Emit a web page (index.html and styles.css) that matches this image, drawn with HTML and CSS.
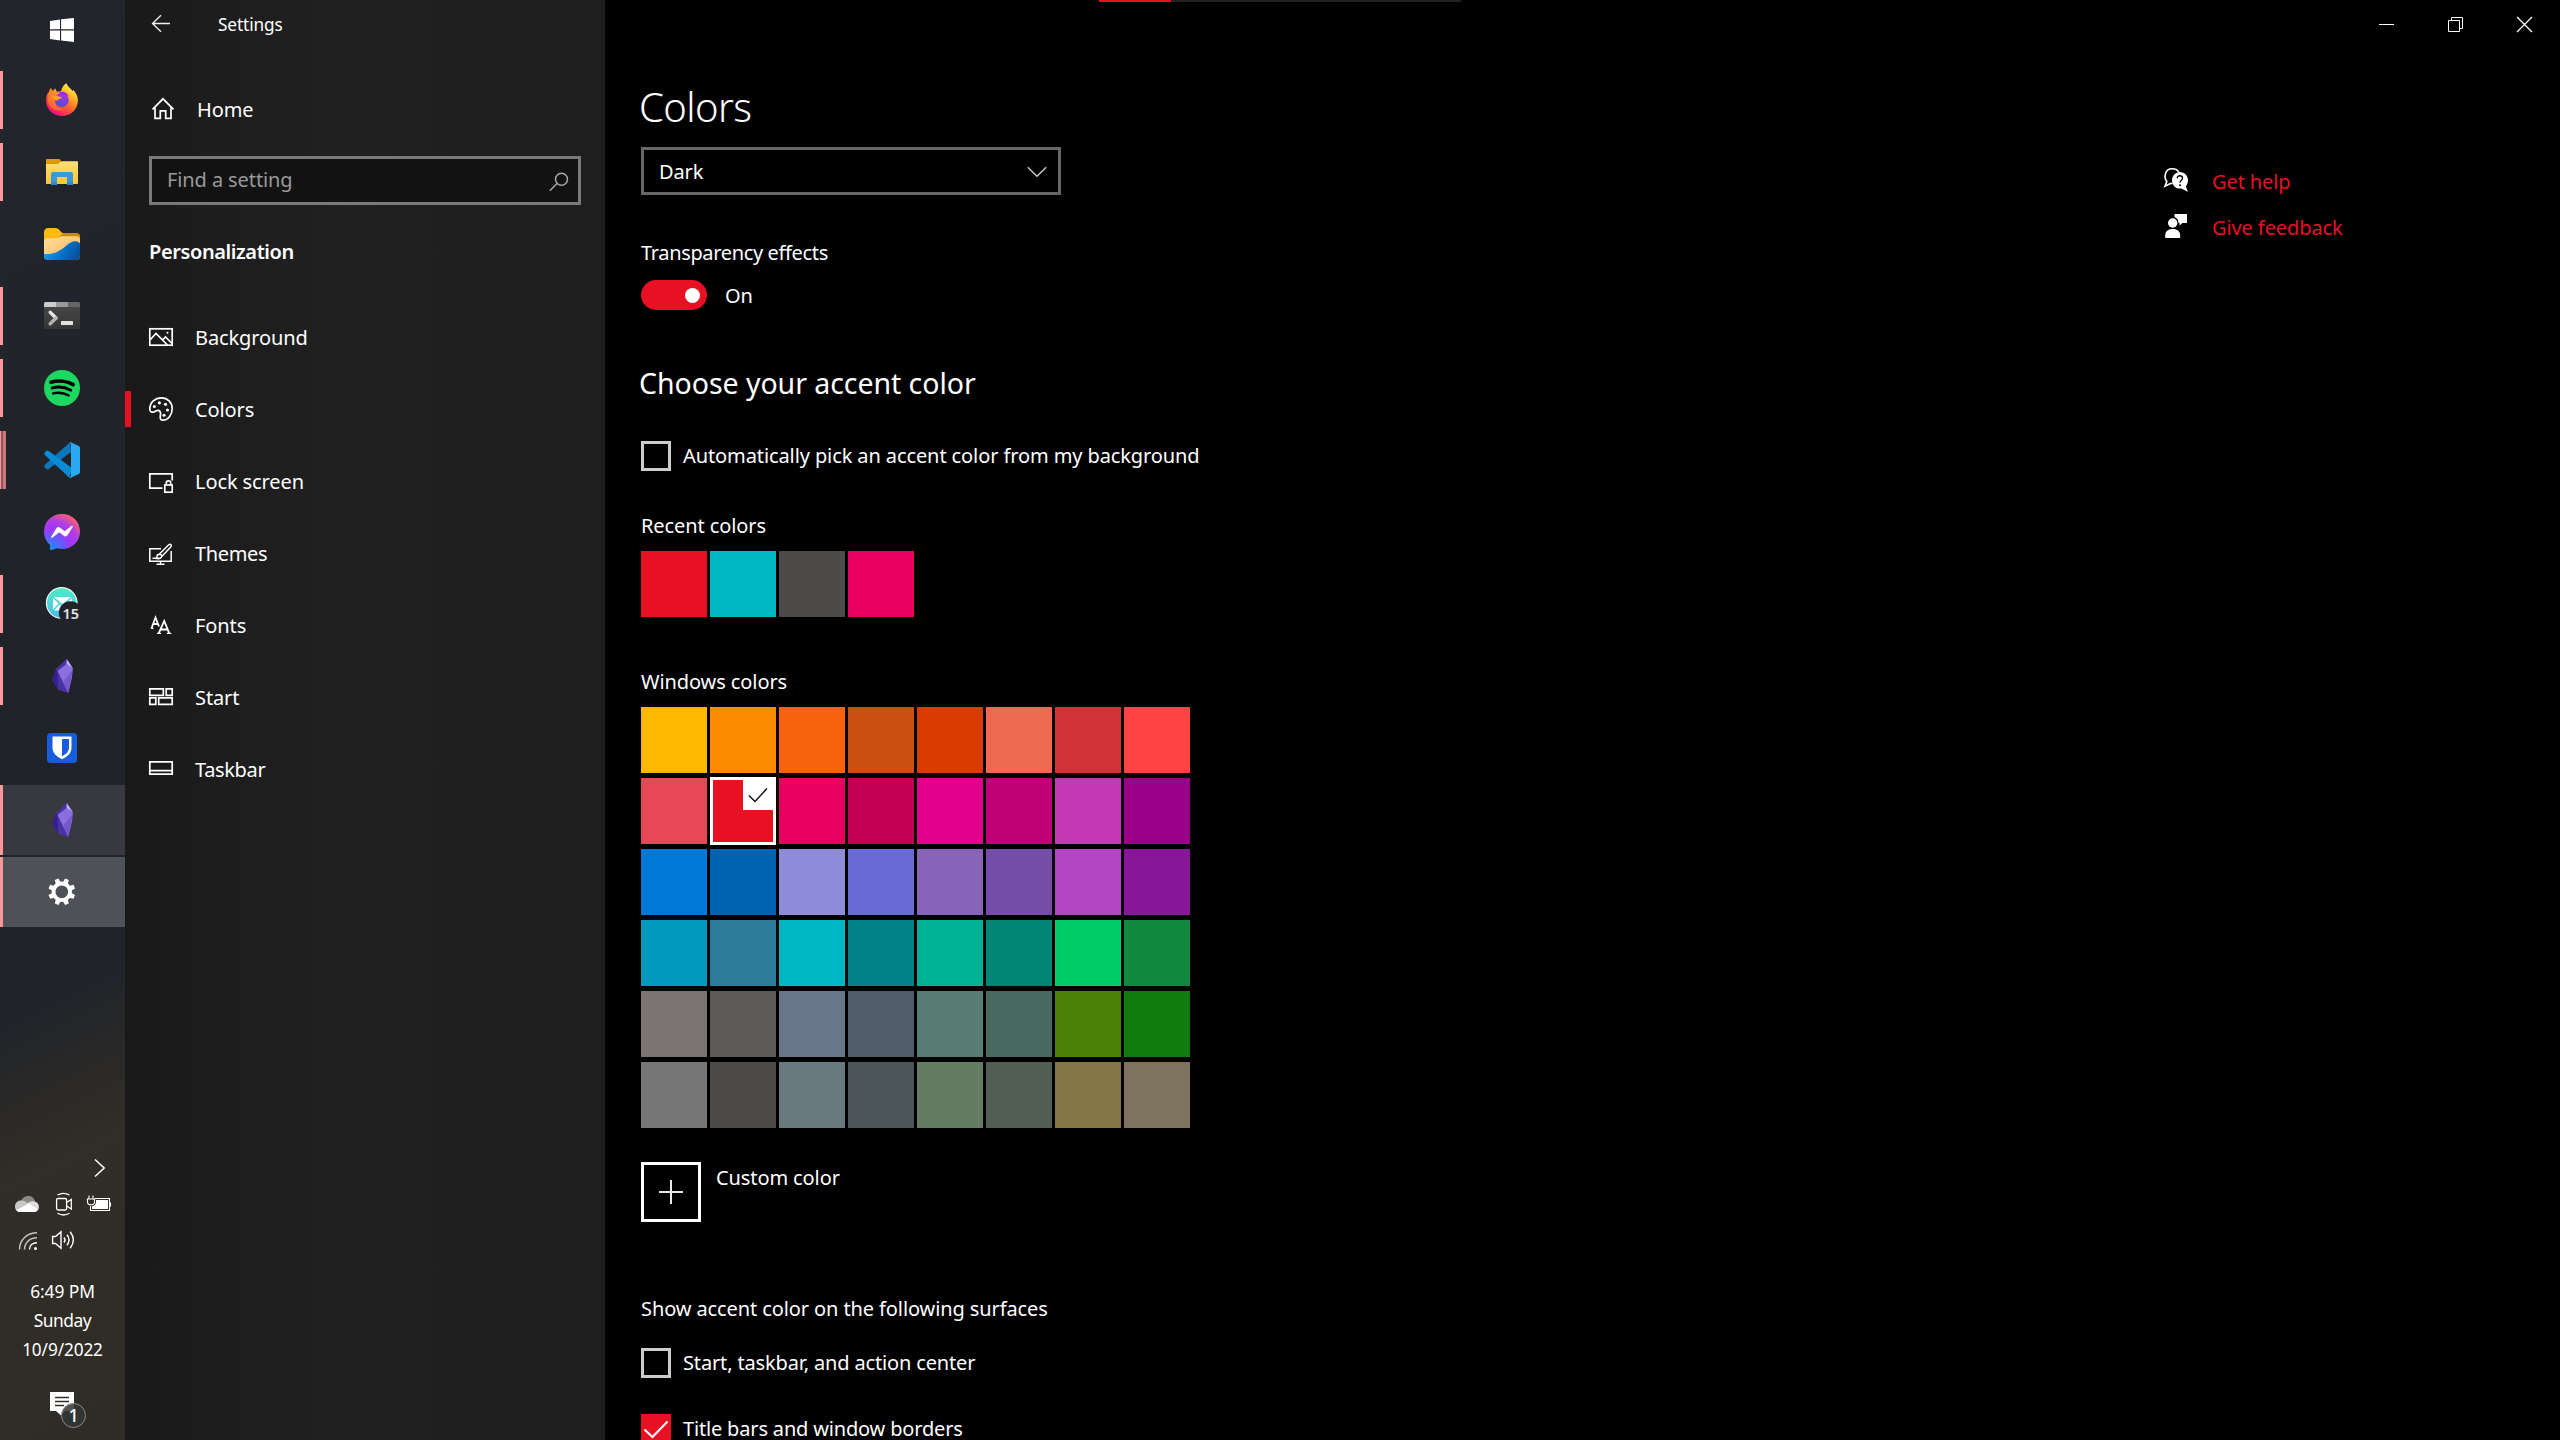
FILE: index.html
```html
<!DOCTYPE html>
<html lang="en">
<head>
<meta charset="utf-8">
<title>Settings</title>
<link rel="stylesheet" href="styles.css">
</head>
<body>
<div class="screen">

<div class="taskbar">
  <div class="task start"><svg width="36" height="36" viewBox="0 0 36 36" fill="#fff"><path d="M6 8.9 16 7.5V17.3H6zM17.1 7.3 30 6V17.3H17.1zM6 18.6H16V28.5L6 27.1zM17.1 18.6H30V30L17.1 28.6z"/></svg></div>

  <div class="task open"><svg width="36" height="36" viewBox="0 0 36 36">
    <defs>
      <linearGradient id="ffBody" x1=".85" y1=".1" x2=".3" y2="1"><stop offset="0" stop-color="#fff04a"/><stop offset=".3" stop-color="#ffb028"/><stop offset=".55" stop-color="#ff6a2c"/><stop offset=".8" stop-color="#ff3250"/><stop offset="1" stop-color="#e00a86"/></linearGradient>
      <linearGradient id="ffBall" x1=".7" y1="0" x2=".3" y2="1"><stop offset="0" stop-color="#b42df0"/><stop offset="1" stop-color="#4a52c8"/></linearGradient>
    </defs>
    <path fill="url(#ffBody)" d="M22.4 1.2C23.4 4.5 27 6.300 28.800 9.300L29.200 7.800C32.500 11.500 34 15 33.900 19C33.500 27.500 27 34 18 34C9 34 2.100 27.500 2.100 18.500C2.100 15 3 11.500 4.500 10L4.800 11.200C5 9 5.800 7 7 5.800C7.300 7.300 8 8.300 9 8.900C9.800 7.500 10.800 6.700 11.600 6.500C11.600 8 12.200 9.200 13.500 9.800L17 9.300C17.500 6 19.500 3 22.400 1.200Z"/>
    <path fill="#ff9422" d="M4.500 11C7 9.500 11 9.500 13.400 10.100L17 14.500L11 19C11 25 17 28 22 26C15 31 5 28 4 19Z" opacity=".55"/>
    <circle cx="17.800" cy="18" r="7" fill="url(#ffBall)"/>
    <path fill="#ff9b20" d="M7.500 14.200C10 13.200 14.500 13.900 17.800 15.200C17 17 14.700 17.200 13.200 18.200C12 19.300 11.200 18 9.500 17.500Z"/>
    <path fill="#9b2be0" d="M15 10.200C19 8.600 23.500 10.800 24.800 14.500C23 12.800 20 12.300 17.500 13.200Z"/>
  </svg></div>

  <div class="task open"><svg width="36" height="36" viewBox="0 0 36 36">
    <defs><linearGradient id="exBody" x1="0" y1="0" x2="0" y2="1"><stop offset="0" stop-color="#ffdf78"/><stop offset="1" stop-color="#fbc733"/></linearGradient></defs>
    <path fill="#dc9a05" d="M2 6.200C2 5.500 2.500 5 3.200 5H15C16 5 16.300 6 17.200 7.200L15 10H2z"/>
    <path fill="url(#exBody)" d="M2 10H13.500C15 10 16 7.200 17.500 7.200H33C33.600 7.200 34 7.600 34 8.200V29C34 29.700 33.600 30 33 30H3C2.400 30 2 29.700 2 29z"/>
    <path fill="#3a98df" d="M7 31V20C7 18.800 7.800 18 9 18H27C28.200 18 29 18.800 29 20V31H23V23H13V31z"/>
    <path fill="#1f78c4" d="M7 28H13V31H7zM23 28H29V31H23z" opacity=".5"/>
  </svg></div>

  <div class="task"><svg width="36" height="32" viewBox="0 0 36 32">
    <defs>
      <linearGradient id="fiSand" x1="0" y1="0" x2="1" y2="1"><stop offset="0" stop-color="#ffe0a0"/><stop offset="1" stop-color="#ffb057"/></linearGradient>
      <linearGradient id="fiSea" x1="0" y1=".6" x2="1" y2=".9"><stop offset="0" stop-color="#109df0"/><stop offset=".5" stop-color="#0470c4"/><stop offset="1" stop-color="#0c4a92"/></linearGradient>
      <clipPath id="fiClip"><path d="M0 14.500C0 12 1.500 10.200 4 10.200H13C16 10.200 15.500 8.200 19 8.200H33C35 8.200 36 9.500 36 11.500V28C36 30.500 34.500 32 32 32H4C1.500 32 0 30.500 0 28z"/></clipPath>
    </defs>
    <path fill="#ffba14" d="M0 4.500C0 1.500 1.500 0 4.500 0H11C16 0 16 5 20 5.200H32C35 5.200 36 6.500 36 9V18H0z"/>
    <path fill="#c48c08" d="M20 5.200H32C35 5.200 36 6.500 36 9V14L14 11C17 10.500 15 6.500 20 5.200z"/>
    <g clip-path="url(#fiClip)"><path fill="url(#fiSand)" d="M0 8H36V32H0z"/><path fill="url(#fiSea)" d="M0 26C8 26.500 13 24.500 18 21C24 16.500 26 13.500 31 13.200C34 13 35 14.500 36 15.500V32H0z"/></g>
  </svg></div>

  <div class="task open"><svg width="36" height="36" viewBox="0 0 36 36">
    <defs><linearGradient id="teBody" x1="0" y1="0" x2="0" y2="1"><stop offset="0" stop-color="#4a4a4a"/><stop offset="1" stop-color="#353535"/></linearGradient></defs>
    <rect y="4" width="36" height="27" rx="1.500" fill="url(#teBody)"/>
    <path fill="#ccc" d="M1.500 4H12V9H0V5.500Q0 4 1.500 4z"/><path fill="#999" d="M12 4H24V9H12z"/><path fill="#666" d="M24 4H34.500Q36 4 36 5.500V9H24z"/>
    <path d="M6.200 14.300 12 20" fill="none" stroke="#e4e4e4" stroke-width="3.400" stroke-linecap="round"/><path d="M12 20 6.200 25.700" fill="none" stroke="#b4b4b4" stroke-width="3.400" stroke-linecap="round"/>
    <rect x="17" y="23" width="12" height="4" rx=".5" fill="#e2e2e2"/>
  </svg></div>

  <div class="task open"><svg width="36" height="36" viewBox="0 0 36 36">
    <circle cx="18" cy="18" r="18" fill="#1ed760"/>
    <g fill="none" stroke="#000" stroke-linecap="round"><path d="M7 12.200C14 10.300 23 11 29.200 14.600" stroke-width="3.600"/><path d="M8.200 18C14 16.400 21.300 17.200 26.800 20.200" stroke-width="2.900"/><path d="M9 23.400C14.500 22.100 20 22.800 24.700 25.500" stroke-width="2.300"/></g>
  </svg></div>

  <div class="task open grouped"><svg width="36" height="36" viewBox="0 0 36 36">
    <path fill="#0b76ba" d="M26 .2 1.100 22.600Q-.4 24 .6 25.300L2.600 27.300Q3.400 27.900 4.400 27.200L27 10z"/>
    <path fill="#0a8bd6" d="M4.400 8.700Q3.400 8 2.500 8.700L.6 10.500Q-.4 12 1.100 13.300L25.500 35.800 28 26z"/>
    <path fill="#29a9f2" d="M25.500 35.800Q27 34.700 27 33V3Q27 1.200 25.600.1Q26.200-.1 27 .3L34.800 4Q36 4.700 36 6V30Q36 31.300 34.800 32L27 35.700Q26.200 36.100 25.500 35.800z"/>
  </svg></div>

  <div class="task"><svg width="36" height="36" viewBox="0 0 36 36">
    <defs><radialGradient id="meFill" cx=".18" cy="1" r="1.100"><stop offset="0" stop-color="#0a95ff"/><stop offset=".55" stop-color="#a334fa"/><stop offset=".75" stop-color="#b040e0"/><stop offset="1" stop-color="#ff6070"/></radialGradient></defs>
    <path fill="url(#meFill)" d="M18 0C28.200 0 36 7.500 36 17.500S28.200 35 18 35C16.300 35 14.500 34.700 13 34.300L8 36C7 36.300 6 35.800 6 34.800V31C2 27.500 0 23 0 17.500C0 7.500 7.800 0 18 0z"/>
    <path fill="#fff" d="M7.200 22.700 12.400 14.200Q13.900 12.200 15.900 13.400L20 16.700Q20.700 17.100 21.300 16.700L27.400 12.100Q28.700 11.400 28.800 12.700L23.500 21.300Q22 23.200 20 21.900L15.900 18.800Q15.300 18.400 14.700 18.800L8.200 23.800Q7.200 24.200 7.200 22.700z"/>
  </svg></div>

  <div class="task open"><svg width="38" height="40" viewBox="0 0 38 40">
    <defs><linearGradient id="maFill" x1="0" y1="0" x2="0" y2="1"><stop offset="0" stop-color="#50e8c4"/><stop offset=".5" stop-color="#4fd8dc"/><stop offset="1" stop-color="#48b4f0"/></linearGradient></defs>
    <circle cx="17.700" cy="19" r="15.300" fill="url(#maFill)" stroke="#f4f8f8" stroke-width="1.200"/>
    <path fill="#fff" d="M10 13H27L18.500 20zM9 14 14.500 19.500 9 25.500zM10 26.500 15.500 20.500 18.500 23 21.500 20.500 27 26.500zM28 14V25.500L22.500 19.500z"/>
    <circle cx="26.500" cy="29" r="11.700" fill="#22232a"/>
    <text x="26.800" y="34.500" class="count">15</text>
  </svg></div>

  <div class="task open"><svg width="36" height="36" viewBox="0 0 36 36">
    <g id="crystal"><path fill="#4a32a2" d="M22.700 1 12 11 8 22 14.500 32 24.300 35 28 19 28.800 10z"/><path fill="#34208a" d="M11.800 11 8 21.500 14 31.500 13.500 13z"/><path fill="#8a70dc" d="M13.500 13 22.500 6 28.800 10 28 19 24.300 35z"/><path fill="#6c50c4" d="M28.600 12 24.300 35 19 24z" opacity=".7"/><path fill="#c2b2f4" d="M22.700 1 28.800 10 22.500 6z"/></g>
  </svg></div>

  <div class="task"><svg width="36" height="36" viewBox="0 0 36 36">
    <rect x="3" y="3" width="30" height="30" rx="3.500" fill="#175ddc"/><path fill="#fff" d="M8.500 6.500H27.500V17.500C27.500 23.500 23 27 18 29.200C13 27 8.500 23.500 8.500 17.500z"/><path fill="#175ddc" d="M18 9H25V17.500C25 21.500 22 24.300 18 26.200z"/>
  </svg></div>

  <div class="task open window"><svg width="36" height="36" viewBox="0 0 36 36"><use href="#crystal"/></svg></div>

  <div class="task open window active"><svg width="36" height="36" viewBox="0 0 36 36">
    <circle cx="17.800" cy="17.800" r="8.300" fill="none" stroke="#fff" stroke-width="3.800"/>
    <g fill="#fff" transform="translate(17.800 17.800) rotate(22.500)"><path id="tooth" d="M-2.600-9-2-13.500H2L2.600-9z"/><use href="#tooth" transform="rotate(45)"/><use href="#tooth" transform="rotate(90)"/><use href="#tooth" transform="rotate(135)"/><use href="#tooth" transform="rotate(180)"/><use href="#tooth" transform="rotate(225)"/><use href="#tooth" transform="rotate(270)"/><use href="#tooth" transform="rotate(315)"/></g>
  </svg></div>

  <div class="tray">
    <svg class="expand" width="36" height="36" viewBox="0 0 36 36"><path d="M14 9.500 23.200 18 14 26.500" fill="none" stroke="#fff" stroke-width="1.500"/></svg>
    <svg width="36" height="36" viewBox="0 0 36 36"><path fill="#8c8984" d="M12 15C13.500 11 17 10 19.500 10C22.500 10 25.500 12 26 15.500L20 20z"/><path fill="#c9c8c6" d="M11 26C8 26 6 23.500 6 20.500C6 17 8.500 14.500 12 14.500C14 14.500 15.500 15 17 16L22 19z"/><path fill="#dedddc" d="M17 18.500C20 15 24 15 25.500 15.500C28.500 16 30 18.500 30 21C30 22 29.500 23 29 24z"/><path fill="#fff" d="M7.300 24 20 17.500 29.200 23.500C28.500 25.200 27 26 25.500 26H11C9.500 26 8 25.300 7.300 24z"/></svg>
    <svg width="36" height="36" viewBox="0 0 36 36" fill="none" stroke="#fff" stroke-width="1.300"><rect x="11.600" y="12.500" width="10" height="11.500" rx="1.500"/><path d="M21.600 16.500 26.300 13.500V23L21.600 20M12.500 9C16 7 21 7 24.500 9M12.500 27.300C16 29.300 21 29.300 24.500 27.300"/></svg>
    <svg width="36" height="36" viewBox="0 0 36 36"><path fill="none" stroke="#fff" stroke-width="1.100" d="M14 12.500H28.500V24.500H9.500V20M6.500 13V16Q6.500 18.800 10 18.800T13.500 16V13M5.800 13H14.200M8 13V9.500M12 13V9.500M29.500 16.500V20.500"/><path fill="#fff" d="M15 14H27V23H11V20.200Q15 19.500 15 16z"/></svg>
    <svg width="36" height="36" viewBox="0 0 36 36" fill="none" stroke="#fff" stroke-width="1.400"><g stroke="#c8c6c3"><path d="M10.500 27.500C10.500 18 18 10.700 28 10.700"/><path d="M15.500 27.500C15.500 21 20.500 15.700 28 15.700"/></g><path d="M20.500 27.500C20.500 23.500 23.500 20.700 28 20.700"/><circle cx="26.500" cy="26.500" r="1.500" fill="#fff" stroke="none"/></svg>
    <svg width="36" height="36" viewBox="0 0 36 36" fill="none" stroke="#fff" stroke-width="1.400"><path d="M7.600 14.500H10.500L16 9.800V26.200L10.500 21.500H7.600zM19 15.500Q21 18 19 20.500M22 12.800Q26 18 22 23.200M25.200 9.800Q31.500 18 25.200 26.200"/></svg>
  </div>
  <div class="clock"><div>6:49 PM</div><div class="day">Sunday</div><div class="date">10/9/2022</div></div>
  <div class="notify"><svg width="38" height="38" viewBox="0 0 38 38"><path fill="#fff" d="M0 0H24V19H15L11 23.500 6 19H0z"/><path stroke="#302d28" stroke-width="1.300" d="M5 5.500H19M5 9.500H19M5 13.500H14"/><circle cx="23.500" cy="23.500" r="12" fill="#333436" fill-opacity=".86" stroke="#8b8a88" stroke-width="1"/><text x="23.500" y="29.800" class="unread">1</text></svg></div>
</div>

<div class="sidebar">
  <div class="caption"><svg width="24" height="24" viewBox="0 0 24 24" fill="none" stroke="#f0f0f0" stroke-width="1.300"><path d="M21 11.500H3.500M12 3.200 3.500 11.500 12 19.800"/></svg><span>Settings</span></div>
  <div class="home"><svg width="24" height="24" viewBox="0 0 24 24" fill="none" stroke="#fff" stroke-width="1.700"><path d="M1.500 12.300 12 1.800 22.500 12.300M4 10.200V21.300H9.300V13.800H14.700V21.300H20V10.200"/></svg><span>Home</span></div>
  <div class="search"><span>Find a setting</span><svg width="20" height="20" viewBox="0 0 20 20" fill="none" stroke="#aaa" stroke-width="1.400"><circle cx="12.500" cy="7.300" r="6"/><path d="M8.100 11.600.8 18.800"/></svg></div>
  <div class="section">Personalization</div>
  <div class="nav">
    <div class="item"><svg width="24" height="24" viewBox="0 0 24 24" fill="none" stroke="#fff" stroke-width="1.700"><rect x=".8" y="3.800" width="22.400" height="16.400"/><path d="M1 15 7 8.500 18.500 20M13.500 15 16.500 12 23 18.500"/><circle cx="18.500" cy="7.700" r="1" fill="#fff" stroke="none"/></svg><span>Background</span></div>
    <div class="item current"><svg width="24" height="24" viewBox="0 0 24 24"><path fill="none" stroke="#fff" stroke-width="1.700" d="M12.500.8C18.500.8 23.200 5.500 23.200 11.500C23.200 18 19 23.200 14 23.200C11.500 23.200 11 21.500 11.300 19.500C11.700 17.500 11.800 15 10.500 13.800C9 12.400 7.500 13.800 5.500 14.700C3 15.800.8 15 .8 12.200C.8 5.500 6 .8 12.500.8z"/><g fill="#fff"><circle cx="5.300" cy="9.500" r="1.500"/><circle cx="10.400" cy="5.800" r="1.600"/><circle cx="16.500" cy="7.300" r="1.600"/><circle cx="18.500" cy="13" r="1.500"/><circle cx="15" cy="18.300" r="1.500"/></g></svg><span>Colors</span></div>
    <div class="item"><svg width="24" height="24" viewBox="0 0 24 24" fill="none" stroke="#fff" stroke-width="1.700"><path d="M13.500 19.200H.8V4.800H23.200V11.500"/><rect x="15.800" y="16" width="7.400" height="7.200"/><path d="M17.300 16V13.800C17.300 11.300 21.700 11.300 21.700 13.800V16"/></svg><span>Lock screen</span></div>
    <div class="item"><svg width="24" height="24" viewBox="0 0 24 24" fill="none" stroke="#fff" stroke-width="1.500"><path d="M12 7.700H.8V20.300H22.200V10M11.500 20.500V23M7.500 23.200H15.500M3.500 17.300H10M10.200 13.300 19.500 4Q21.500 2.500 22.300 4.300Q22.500 5 21.500 6.300L13 15.200M10.200 13.300Q8 13.500 8 15.300Q8 17 6.500 17.300Q11.500 18.500 13 15.200Q12.500 13.300 10.200 13.300"/></svg><span class="snug">Themes</span></div>
    <div class="item"><svg width="24" height="24" viewBox="0 0 24 24" fill="none" stroke="#fff" stroke-width="1.800"><path d="M2.500 15.300 6.500 4.500 10 13.500M3.800 11H9M9.700 20.300 15.200 8 20.300 20.300M11.500 16.500H18.700"/><path stroke-width="1.300" d="M1.800 15.400H4.500M8 20.400H12M17.700 20.400H22.300"/></svg><span>Fonts</span></div>
    <div class="item"><svg width="24" height="24" viewBox="0 0 24 24" fill="none" stroke="#fff" stroke-width="1.700"><path d="M.8 3.800H14.300V10.300H.8zM17.200 3.800H23.200V10.300H17.200zM.8 12.900H6.800V19.400H.8zM9.700 12.900H23.200V19.400H9.700z"/></svg><span>Start</span></div>
    <div class="item"><svg width="24" height="24" viewBox="0 0 24 24" fill="none" stroke="#fff" stroke-width="1.700"><path d="M.8 4.800H23.200V17.200H.8zM.8 13.600H23.200"/></svg><span class="snug">Taskbar</span></div>
  </div>
</div>

<div class="main">
  <div class="volume"><div class="level"></div></div>
  <div class="window-buttons">
    <div><svg width="16" height="16" viewBox="0 0 16 16" stroke="#fff"><path d="M0 7.500H15"/></svg></div>
    <div><svg width="16" height="16" viewBox="0 0 16 16" fill="none" stroke="#fff"><path d="M.5 3.500H11.500V14.500H.5zM3.500 3.500V.5H14.500V11.500H11.500"/></svg></div>
    <div><svg width="16" height="16" viewBox="0 0 16 16" stroke="#fff" stroke-width="1.300"><path d="M0 0 15 15M15 0 0 15"/></svg></div>
  </div>
  <div class="page">
    <div class="content">
      <h1>Colors</h1>
      <div class="select"><span>Dark</span><svg width="20" height="12" viewBox="0 0 20 12" fill="none" stroke="#ccc" stroke-width="1.400"><path d="M.8 1.200 10 10.200 19.200 1.200"/></svg></div>
      <div class="label transparency snug">Transparency effects</div>
      <div class="switch-row"><div class="switch"><div class="thumb"></div></div><span>On</span></div>
      <h2>Choose your accent color</h2>
      <div class="check auto"><div class="box"></div><span>Automatically pick an accent color from my background</span></div>
      <div class="label recent">Recent colors</div>
      <div class="swatches">
        <i class="c-e81123"></i><i class="c-00b7c3"></i><i class="c-4c4a48"></i><i class="c-ea005e"></i>
      </div>
      <div class="label windows">Windows colors</div>
      <div class="swatches">
        <i class="c-ffb900"></i><i class="c-ff8c00"></i><i class="c-f7630c"></i><i class="c-ca5010"></i><i class="c-da3b01"></i><i class="c-ef6950"></i><i class="c-d13438"></i><i class="c-ff4343"></i>
        <i class="c-e74856"></i><i class="c-e81123 selected"><svg width="33" height="33" viewBox="0 0 33 33"><path fill="#fff" d="M0 0H33V33H0z"/><path d="M6 18.500 12 24.500 24 11.500" fill="none" stroke="#111" stroke-width="1.500"/></svg></i><i class="c-ea005e"></i><i class="c-c30052"></i><i class="c-e3008c"></i><i class="c-bf0077"></i><i class="c-c239b3"></i><i class="c-9a0089"></i>
        <i class="c-0078d7"></i><i class="c-0063b1"></i><i class="c-8e8cd8"></i><i class="c-6b69d6"></i><i class="c-8764b8"></i><i class="c-744da9"></i><i class="c-b146c2"></i><i class="c-881798"></i>
        <i class="c-0099bc"></i><i class="c-2d7d9a"></i><i class="c-00b7c3"></i><i class="c-038387"></i><i class="c-00b294"></i><i class="c-018574"></i><i class="c-00cc6a"></i><i class="c-10893e"></i>
        <i class="c-7a7574"></i><i class="c-5d5a58"></i><i class="c-68768a"></i><i class="c-515c6b"></i><i class="c-567c73"></i><i class="c-486860"></i><i class="c-498205"></i><i class="c-107c10"></i>
        <i class="c-767676"></i><i class="c-4c4a48"></i><i class="c-69797e"></i><i class="c-4a5459"></i><i class="c-647c64"></i><i class="c-525e54"></i><i class="c-847545"></i><i class="c-7e735f"></i>
      </div>
      <div class="custom"><div class="add"><svg width="24" height="24" viewBox="0 0 24 24" stroke="#e8e8e8" stroke-width="2"><path d="M12 0V24M0 12H24"/></svg></div><span>Custom color</span></div>
      <div class="label surfaces">Show accent color on the following surfaces</div>
      <div class="check start-surface"><div class="box"></div><span>Start, taskbar, and action center</span></div>
      <div class="check title-surface"><div class="box on"><svg width="30" height="30" viewBox="0 0 30 30" fill="none" stroke="#fff" stroke-width="2"><path d="M3.500 15.500 11.500 23 26.500 7.500"/></svg></div><span>Title bars and window borders</span></div>
    </div>
    <div class="links">
      <div class="link"><svg width="24" height="24" viewBox="0 0 24 24"><path fill="none" stroke="#fff" stroke-width="1.600" d="M7 15.300 1 18.200 2.800 13.500C-.5 9 1 .8 8 .8C11.500.8 14 2.500 15 4.500M7 15.500H8.500"/><path fill="#fff" d="M16 4C20.500 4 24 7.700 24 12.200C24 15 23 17 21.800 18.300L24 24 17.500 20.500C12 21.300 8 17.500 8 12.500C8 7.700 11.500 4 16 4z"/><path fill="none" stroke="#000" stroke-width="1.400" d="M13.300 10.200C13.300 6.700 18.700 7 18.500 10.200C18.300 12.300 16 12.200 16 14.800"/><circle cx="16" cy="17.300" r="1"/></svg><span>Get help</span></div>
      <div class="link"><svg width="24" height="24" viewBox="0 0 24 24" fill="#fff"><circle cx="8.700" cy="9" r="4.700"/><path d="M1.200 24V21.500C1.200 17.500 4 15 8.700 15S16.200 17.500 16.200 21.500V24zM10.500 0H23V9H18.500L15.500 11.500V9H14.500C14.500 6 13 4 10.500 3z"/></svg><span>Give feedback</span></div>
    </div>
  </div>
</div>

</div>
</body>
</html>
```
FILE: styles.css
```css
* { box-sizing: border-box; }

body {
  margin: 0;
  background: #000;
  color: #fff;
  font: 20px/28px "Noto Sans", "Open Sans", sans-serif;
  letter-spacing: -0.1px;
}

svg { display: block; flex: none; overflow: visible; }
span { white-space: nowrap; }

.screen {
  display: flex;
  width: 2560px;
  height: 1440px;
  overflow: hidden;
}

/* Taskbar */
.taskbar {
  flex: none;
  display: flex;
  flex-direction: column;
  width: 125px;
  background: linear-gradient(154deg, #22252b 0%, #202429 45%, #202429 68%, #2a2928 74%, #312d27 79%, #2f2c27 100%);
}
.task {
  flex: none;
  display: flex;
  align-items: center;
  height: 72px;
  padding-left: 41px;
  border-left: 3px solid transparent;
}
.task.start { height: 64px; padding-bottom: 4px; }
.task.open { border-left: 0; padding-left: 44px; background: linear-gradient(#ff969c, #ff969c) 0 7px / 3px 58px no-repeat; }
.task.grouped {
  background:
    linear-gradient(#ff969c, #ff969c) 0 7px / 1px 58px no-repeat,
    linear-gradient(#8d5a60, #8d5a60) 1px 7px / 2px 58px no-repeat,
    linear-gradient(#c9777d, #c9777d) 3px 7px / 3px 58px no-repeat;
}
.task.window { background: linear-gradient(90deg, #ff969c 3px, #38393e 3px) 0 1px / 100% 70px no-repeat; }
.task.active { background: linear-gradient(90deg, #ff969c 3px, #4e5156 3px) 0 1px / 100% 70px no-repeat; }
.count { font: 600 14.5px "Noto Sans", sans-serif; fill: #e2e2e2; text-anchor: middle; }

.tray {
  display: grid;
  grid-template-columns: repeat(3, 36px);
  grid-auto-rows: 36px;
  margin: auto 0 0 9px;
}
.expand { grid-column: 3; }
.clock {
  margin-top: 19px;
  font-size: 17.4px;
  line-height: 29px;
  text-align: center;
}
.day { letter-spacing: -0.5px; }
.date { font-size: 17.2px; }
.notify { height: 76px; padding: 28px 0 0 50px; }
.unread { font: 500 18px "Noto Sans", sans-serif; fill: #fff; text-anchor: middle; }

/* Navigation pane */
.sidebar {
  flex: none;
  width: 480px;
  background: linear-gradient(90deg, #191919, #1d1d1d 18%, #202020 45%, #1e1e1e);
}
.caption {
  display: flex;
  align-items: center;
  gap: 45px;
  height: 48px;
  padding-left: 24px;
  font-size: 17.2px;
}
.caption span, .home span, .item span { padding-top: 2px; }
.home {
  display: flex;
  align-items: center;
  gap: 22px;
  height: 40px;
  margin: 41px 0 0 26px;
}
.search {
  display: flex;
  justify-content: space-between;
  width: 432px;
  height: 49px;
  margin: 27px 0 0 24px;
  padding: 7px 9px 0 15px;
  border: 3px solid #7a7a7a;
  background: #121212;
  color: #9a9a9a;
}
.search svg { margin-top: 6px; }
.section { margin: 33px 0 35px 24px; font-weight: 600; letter-spacing: -0.4px; }
.item {
  display: flex;
  align-items: center;
  gap: 22px;
  height: 72px;
  padding-left: 24px;
}
.current { background: linear-gradient(#e81123, #e81123) 0 18px / 6px 36px no-repeat; }
.snug { letter-spacing: -0.35px; }

/* Page */
.main { position: relative; flex: 1; }
.volume {
  position: absolute;
  top: 0;
  left: 494px;
  width: 362px;
  height: 2px;
  background: #222;
}
.level { width: 72px; height: 2px; background: #e81123; }
.window-buttons { display: flex; justify-content: flex-end; height: 48px; padding-right: 1px; }
.window-buttons div { display: flex; align-items: center; justify-content: center; width: 69px; padding-top: 1px; }
.page { display: flex; justify-content: space-between; }
.content { width: 700px; padding: 31px 0 0 36px; }

h1 { margin: 0 0 12px -2px; font-size: 40px; line-height: 56px; font-weight: 350; letter-spacing: -0.6px; }
h2 { margin: 53px 0 38px -2px; font-size: 28.5px; line-height: 40px; font-weight: 400; letter-spacing: -0.05px; }

.select {
  display: flex;
  justify-content: space-between;
  width: 420px;
  height: 48px;
  padding: 8px 11px 0 15px;
  border: 3px solid #666;
}
.select svg { margin-top: 8px; }
.transparency { margin-top: 44px; }
.switch-row { display: flex; gap: 18px; height: 30px; margin-top: 13px; padding-top: 2px; }
.switch {
  display: flex;
  align-items: center;
  justify-content: flex-end;
  width: 66px;
  height: 30px;
  margin-top: -2px;
  padding-right: 7px;
  border-radius: 15px;
  background: #e81123;
}
.thumb { width: 15px; height: 15px; border-radius: 50%; background: #fff; }

.check { display: flex; gap: 12px; height: 30px; }
.check span { padding-top: 1px; }
.box { flex: none; width: 30px; height: 30px; border: 3px solid #ccc; }
.box.on { border: 0; background: #e81123; }
.recent { margin-top: 41px; }
.windows { margin-top: 51px; }
.recent + .swatches, .windows + .swatches { margin-top: 11px; }
.surfaces { margin-top: 73px; }
.start-surface { margin-top: 25px; letter-spacing: -0.15px; }
.title-surface { margin-top: 36px; letter-spacing: -0.17px; }

.swatches {
  display: grid;
  grid-template-columns: repeat(8, 66px);
  grid-auto-rows: 66px;
  gap: 5px 3px;
}
.selected {
  display: flex;
  justify-content: flex-end;
  height: 68px;
  margin-top: -1px;
  outline: 3px solid #fff;
  outline-offset: -3px;
}

.custom { display: flex; gap: 15px; height: 60px; margin-top: 34px; }
.custom span { padding-top: 2px; }
.add { display: flex; align-items: center; justify-content: center; width: 60px; height: 60px; border: 3px solid #fff; }

.links { width: 396px; padding-top: 110px; color: #e81123; }
.link { display: flex; align-items: center; gap: 24px; height: 46px; }
.link svg { margin-top: -2px; }
.link span { padding-top: 1px; }

/* Palette */
.c-ffb900 { background: #ffb900; } .c-ff8c00 { background: #ff8c00; }
.c-f7630c { background: #f7630c; } .c-ca5010 { background: #ca5010; }
.c-da3b01 { background: #da3b01; } .c-ef6950 { background: #ef6950; }
.c-d13438 { background: #d13438; } .c-ff4343 { background: #ff4343; }
.c-e74856 { background: #e74856; } .c-e81123 { background: #e81123; }
.c-ea005e { background: #ea005e; } .c-c30052 { background: #c30052; }
.c-e3008c { background: #e3008c; } .c-bf0077 { background: #bf0077; }
.c-c239b3 { background: #c239b3; } .c-9a0089 { background: #9a0089; }
.c-0078d7 { background: #0078d7; } .c-0063b1 { background: #0063b1; }
.c-8e8cd8 { background: #8e8cd8; } .c-6b69d6 { background: #6b69d6; }
.c-8764b8 { background: #8764b8; } .c-744da9 { background: #744da9; }
.c-b146c2 { background: #b146c2; } .c-881798 { background: #881798; }
.c-0099bc { background: #0099bc; } .c-2d7d9a { background: #2d7d9a; }
.c-00b7c3 { background: #00b7c3; } .c-038387 { background: #038387; }
.c-00b294 { background: #00b294; } .c-018574 { background: #018574; }
.c-00cc6a { background: #00cc6a; } .c-10893e { background: #10893e; }
.c-7a7574 { background: #7a7574; } .c-5d5a58 { background: #5d5a58; }
.c-68768a { background: #68768a; } .c-515c6b { background: #515c6b; }
.c-567c73 { background: #567c73; } .c-486860 { background: #486860; }
.c-498205 { background: #498205; } .c-107c10 { background: #107c10; }
.c-767676 { background: #767676; } .c-4c4a48 { background: #4c4a48; }
.c-69797e { background: #69797e; } .c-4a5459 { background: #4a5459; }
.c-647c64 { background: #647c64; } .c-525e54 { background: #525e54; }
.c-847545 { background: #847545; } .c-7e735f { background: #7e735f; }
```
